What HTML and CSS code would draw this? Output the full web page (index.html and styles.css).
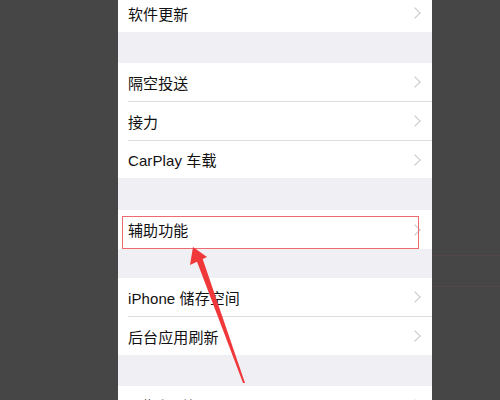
FILE: index.html
```html
<!DOCTYPE html>
<html lang="zh-CN">
<head>
<meta charset="utf-8">
<title>设置</title>
<link rel="stylesheet" href="styles.css">
</head>
<body>
<div class="stage">
  <div class="side-left"></div>
  <div class="panel">
    <div class="group">
      <div class="row"><div class="inner first"><span class="label">软件更新</span><span class="chev"></span></div></div>
    </div>
    <div class="gap g31"></div>
    <div class="group">
      <div class="row"><div class="inner first"><span class="label">隔空投送</span><span class="chev"></span></div></div>
      <div class="row tall"><div class="inner"><span class="label">接力</span><span class="chev"></span></div></div>
      <div class="row"><div class="inner"><span class="label">CarPlay 车载</span><span class="chev"></span></div></div>
    </div>
    <div class="gap g32"></div>
    <div class="group">
      <div class="row tall highlight"><div class="inner first"><span class="label">辅助功能</span><span class="chev"></span></div></div>
    </div>
    <div class="gap g29"></div>
    <div class="group">
      <div class="row"><div class="inner first"><span class="label">iPhone 储存空间</span><span class="chev"></span></div></div>
      <div class="row tall"><div class="inner"><span class="label">后台应用刷新</span><span class="chev"></span></div></div>
    </div>
    <div class="gap g31"></div>
    <div class="group">
      <div class="row"><div class="inner first"><span class="label">日期与时间</span><span class="chev"></span></div></div>
    </div>
  </div>
  <div class="side-right">
    <div class="faint-line l1"></div>
    <div class="faint-line l2"></div>
  </div>
</div>
<svg class="arrow" width="500" height="400" viewBox="0 0 500 400">
  <polygon points="193,247 190,265 207,257" fill="#f0383a"/>
  <polygon points="196,259 202,257 245,383 243,383" fill="#f0383a"/>
</svg>
</body>
</html>
```
FILE: styles.css
```css
html, body {
  margin: 0;
  padding: 0;
}
body {
  width: 500px;
  height: 400px;
  overflow: hidden;
  background: #464646;
  font-family: "Liberation Sans", "Noto Sans CJK SC", sans-serif;
  position: relative;
}
.stage {
  display: flex;
  height: 400px;
}
.side-left {
  width: 118px;
  flex: none;
}
.panel {
  width: 314px;
  flex: none;
  background: #efeff4;
  margin-top: -6px;
}
.side-right {
  flex: 1;
  padding-top: 255px;
}
.faint-line {
  height: 1px;
  background: #534646;
}
.faint-line.l2 {
  margin-top: 30px;
}
.group {
  background: #ffffff;
}
.gap.g31 { height: 31px; }
.gap.g32 { height: 32px; }
.gap.g29 { height: 29px; }
.row {
  height: 38px;
  padding-left: 10px;
  display: flex;
  position: relative;
}
.row.tall {
  height: 39px;
}
.inner {
  flex: 1;
  display: flex;
  align-items: center;
  justify-content: space-between;
  padding-right: 11px;
  border-top: 1px solid #dddde0;
}
.inner.first {
  border-top: none;
}
.label {
  font-size: 15px;
  color: #111111;
  letter-spacing: 0.1px;
}
.chev {
  width: 7px;
  height 7px;
  height: 7px;
  border-top: 1.6px solid #c7c7cc;
  border-right: 1.6px solid #c7c7cc;
  transform: rotate(45deg);
  margin-right: 2px;
}
.row.highlight::after {
  content: "";
  position: absolute;
  left: 4px;
  top: 6px;
  width: 297px;
  height: 33px;
  box-sizing: border-box;
  border: 1.5px solid #ee6a6e;
}
.arrow {
  position: absolute;
  left: 0;
  top: 0;
}
```
